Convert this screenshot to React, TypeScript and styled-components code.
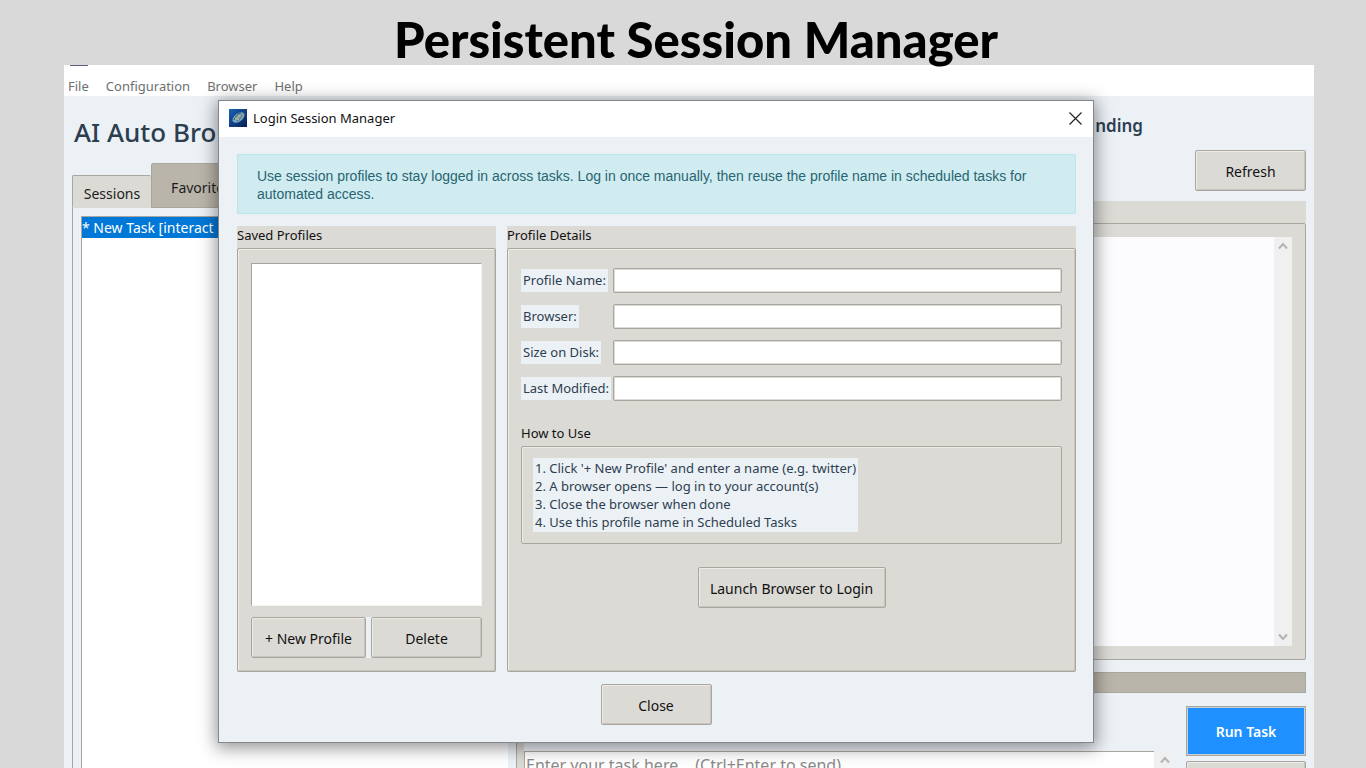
import React from "react";
import styled, { createGlobalStyle, css } from "styled-components";

const ui = '"Noto Sans", "Open Sans", sans-serif';
const color = {
  page: "#d9d9d9",
  pane: "#ecf1f6",
  face: "#dcdad5",
  trough: "#bab5ab",
  edge: "#a9a69f",
  light: "#eeebe7",
  navy: "#2c3e50",
};

const Global = createGlobalStyle`
  * { box-sizing: border-box; }
  body { margin: 0; background: ${color.page}; font-family: ${ui}; }
  h1, h2, h3, p, ol, ul { margin: 0; padding: 0; font-weight: 400; list-style: none; }
  button, input, textarea { font-family: inherit; }
`;

const Page = styled.div`
  position: relative;
  display: flex;
  flex-direction: column;
  height: 100vh;
  overflow: hidden;
`;

const Headline = styled.h1`
  flex: none;
  height: 65px;
  padding: 8px 0 0 26px;
  && { font-weight: 900; }
  font-family: Lato, sans-serif;
  font-size: 49px;
  line-height: 62px;
  text-align: center;
  white-space: nowrap;
  color: #000;
  position: relative;
  z-index: 1;
`;

const AppWindow = styled.main`
  flex: 1;
  min-height: 0;
  display: flex;
  flex-direction: column;
  margin: 0 52px 0 64px;
  background: ${color.pane};
`;

const WindowEdge = styled.div`
  flex: none;
  width: 18px;
  height: 1px;
  margin-left: 6px;
  background: #5b5f86;
`;

const MenuArea = styled.header`
  flex: none;
  height: 31px;
  background: #fff;
`;

const MenuBar = styled.nav`
  display: flex;
  align-items: center;
  gap: 17px;
  padding: 11px 4px 0;
`;

const MenuItem = styled.button`
  border: 0;
  padding: 0;
  background: none;
  font-size: 13px;
  line-height: 18px;
  color: #6f6f6f;
`;

const Workspace = styled.div`
  flex: 1;
  min-height: 0;
  display: grid;
  grid-template-columns: 444px 1fr;
  padding: 0 8px;
`;

const LeftColumn = styled.section`
  display: flex;
  flex-direction: column;
  width: 436px;
  min-height: 0;
`;

const AppTitle = styled.h2`
  flex: none;
  height: 67px;
  padding: 19px 2px 0;
  && { font-weight: 500; }
  font-size: 26px;
  line-height: 34px;
  white-space: nowrap;
  color: ${color.navy};
`;

const Tabs = styled.div`
  flex: none;
  display: flex;
  align-items: flex-end;
  height: 45px;
`;

const Tab = styled.button<{ $active?: boolean }>`
  height: ${(p) => (p.$active ? 33 : 45)}px;
  width: ${(p) => (p.$active ? 79 : 100)}px;
  padding: 3px 0 0;
  border: 1px solid ${color.edge};
  border-bottom-color: ${(p) => (p.$active ? color.face : color.edge)};
  border-right-width: ${(p) => (p.$active ? 0 : 1)}px;
  border-radius: 2px 2px 0 0;
  background: ${(p) => (p.$active ? color.face : color.trough)};
  font-size: 14px;
  color: #1c1c1c;
`;

const TabBody = styled.div`
  flex: 1;
  padding: 8px 0 0 8px;
  border-left: 1px solid ${color.edge};
`;

const TaskList = styled.ul`
  height: 100%;
  border: 1px solid ${color.edge};
  border-width: 1px 0 0 1px;
  background: #fff;
`;

const TaskItem = styled.li`
  height: 21px;
  font-size: 14px;
  line-height: 21px;
  white-space: nowrap;
  background: #0078d7;
  color: #fff;
`;

const RightColumn = styled.section`
  display: flex;
  flex-direction: column;
  min-width: 0;
  min-height: 0;
  & > * { flex: none; }
`;

const Status = styled.p`
  height: 54px;
  padding: 17px 163px 0 0;
  text-align: right;
  font-size: 17px;
  line-height: 26px;
  && { font-weight: 600; }
  color: ${color.navy};
`;

const ToolRow = styled.div`
  display: flex;
  justify-content: flex-end;
  height: 51px;
`;

const Button = styled.button<{ $width?: number }>`
  height: 41px;
  min-width: ${(p) => p.$width ?? 111}px;
  padding: 2px 0 0;
  border: 1px solid ${color.edge};
  border-radius: 2px;
  background: ${color.face};
  box-shadow: inset 1px 1px 0 ${color.light}, inset -1px -1px 0 #c9c5bd;
  font-size: 14px;
  line-height: 20px;
  white-space: nowrap;
  color: #111;
`;

const OutputHead = styled.div`
  height: 22px;
  background: ${color.face};
`;

const OutputFrame = styled.div`
  height: 437px;
  padding: 13px;
  border: 1px solid ${color.edge};
  border-radius: 2px;
  background: ${color.face};
`;

const OutputPane = styled.div`
  display: flex;
  justify-content: flex-end;
  height: 100%;
  background: #fcfcff;
`;

const ScrollTrack = styled.div`
  display: flex;
  flex-direction: column;
  justify-content: space-between;
  align-items: center;
  width: 18px;
  padding: 5px 0;
  background: #f0f0f0;
`;

const ProgressTrough = styled.div`
  height: 21px;
  margin: 12px 0 13px;
  border: 1px solid ${color.edge};
  background: ${color.trough};
`;

const PromptRow = styled.div`
  display: flex;
  gap: 12px;
`;

const PromptFrame = styled.div`
  flex: 1;
  display: flex;
  align-items: flex-start;
  height: 140px;
  padding: 45px 0 0 7px;
  border-left: 1px solid ${color.edge};
  background: linear-gradient(90deg, ${color.face} 7px, ${color.pane} 7px);
`;

const Prompt = styled.textarea`
  flex: 1;
  height: 90px;
  margin-right: 2px;
  padding: 3px 1px;
  border: 1px solid ${color.edge};
  border-right: 0;
  resize: none;
  outline: none;
  overflow: hidden;
  font-size: 16px;
  line-height: 20px;
  background: #fff;
  &::placeholder { color: #8a8a8a; opacity: 1; }
`;

const PromptScroll = styled(ScrollTrack)`
  height: 90px;
`;

const PromptActions = styled.div`
  display: flex;
  flex-direction: column;
  gap: 5px;
`;

const RunButton = styled.button`
  width: 120px;
  height: 50px;
  padding: 0;
  border: 1px solid ${color.edge};
  background: #1e90ff;
  box-shadow: inset 0 0 0 1px #c9cfd6;
  font-size: 14px;
  font-weight: 600;
  color: #fff;
`;

const Dialog = styled.div`
  position: absolute;
  top: 100px;
  left: 218px;
  right: 272px;
  border: 1px solid #85888b;
  background: ${color.pane};
  box-shadow: 0 3px 16px 2px rgba(0, 0, 0, 0.42);
`;

const TitleBar = styled.header`
  display: flex;
  align-items: center;
  gap: 6px;
  height: 36px;
  padding: 0 11px 2px 10px;
  background: #fff;
`;

const DialogTitle = styled.h2`
  flex: 1;
  font-size: 13px;
  line-height: 18px;
  color: #111;
`;

const CloseIconButton = styled.button`
  display: flex;
  border: 0;
  padding: 0;
  background: none;
`;

const DialogBody = styled.div`
  display: flex;
  flex-direction: column;
  gap: 12px;
  padding: 17px 18px;
`;

const Banner = styled.p`
  margin-right: -1px;
  padding: 12px 18px 10px 19px;
  border: 1px solid #bee5eb;
  background: #d1ecf1;
  font-family: "Liberation Sans", Arial, sans-serif;
  font-size: 14px;
  line-height: 18px;
  color: #276572;
`;

const Groups = styled.div`
  display: grid;
  grid-template-columns: 259px 1fr;
  gap: 11px;
  height: 446px;
  margin-right: -1px;
`;

const Group = styled.section`
  display: flex;
  flex-direction: column;
  min-width: 0;
  background: ${color.face};
`;

const groupTitle = css`
  font-size: 13px;
  line-height: 18px;
  color: #111;
`;

const GroupTitle = styled.h3`
  ${groupTitle}
  height: 22px;
`;

const Frame = styled.div`
  flex: 1;
  display: flex;
  flex-direction: column;
  padding: 14px 13px 13px;
  border: 1px solid ${color.edge};
  border-radius: 2px;
  box-shadow: inset 1px 1px 0 ${color.light}, inset -1px -1px 0 #c9c5bd;
`;

const ProfileList = styled.ul`
  flex: 1;
  margin: 0 0 11px;
  border: 1px solid;
  border-color: #a5a5a5 #f4f4f4 #f4f4f4 #a5a5a5;
  background: #fff;
`;

const ProfileActions = styled.div`
  display: grid;
  grid-template-columns: 115px 1fr;
  gap: 5px;
  background: ${color.pane};
`;

const Form = styled.div`
  display: grid;
  grid-template-columns: 92px 1fr;
  align-items: center;
  row-gap: 11px;
  padding-top: 5px;
`;

const FieldLabel = styled.label`
  justify-self: start;
  height: 23px;
  padding: 0 2px;
  font-size: 13px;
  line-height: 22px;
  white-space: nowrap;
  background: ${color.pane};
  color: ${color.navy};
`;

const TextField = styled.input`
  width: 100%;
  height: 25px;
  padding: 0 4px;
  border: 1px solid ${color.edge};
  border-radius: 2px;
  box-shadow: inset 0 0 0 1px #dddbd6;
  outline: none;
  font-size: 13px;
  background: #fff;
`;

const HelpTitle = styled.h3`
  ${groupTitle}
  margin: 23px 0 4px;
`;

const HelpFrame = styled.div`
  display: flex;
  align-items: flex-start;
  padding: 11px;
  border: 1px solid ${color.edge};
  border-radius: 2px;
  box-shadow: inset 1px 1px 0 ${color.light};
`;

const HelpSteps = styled.ol`
  padding: 1px 2px;
  font-size: 13px;
  line-height: 18px;
  white-space: nowrap;
  background: ${color.pane};
  color: ${color.navy};
`;

const LaunchRow = styled.div`
  display: flex;
  justify-content: center;
  margin-top: 23px;
`;

const Footer = styled.footer`
  display: flex;
  justify-content: center;
`;

const Chevron = ({ down }: { down?: boolean }) => (
  <svg width="10" height="8" viewBox="0 0 10 8" fill="none" stroke="#b4b4b4" strokeWidth="2" aria-hidden="true">
    <path d={down ? "M1 1.5 5 6 9 1.5" : "M1 6.5 5 2 9 6.5"} />
  </svg>
);

const AppIcon = () => (
  <svg width="18" height="18" viewBox="0 0 18 18" aria-hidden="true">
    <defs>
      <linearGradient id="sky" x1="0" y1="0" x2="1" y2="1">
        <stop offset="0" stopColor="#1a62b4" />
        <stop offset="0.5" stopColor="#123f86" />
        <stop offset="1" stopColor="#071f4c" />
      </linearGradient>
      <linearGradient id="disc" x1="0" y1="1" x2="1" y2="0">
        <stop offset="0" stopColor="#4fa3dd" />
        <stop offset="0.5" stopColor="#8fa9a6" />
        <stop offset="1" stopColor="#5f93b5" />
      </linearGradient>
    </defs>
    <rect width="18" height="18" fill="url(#sky)" />
    <ellipse cx="9.5" cy="8.5" rx="7" ry="4" transform="rotate(-38 9.5 8.5)" fill="url(#disc)" />
    <path d="M5 11c1-3 3-6 7-7" stroke="#2b5c88" strokeWidth="1" fill="none" />
    <path d="M8 12c2-1 4-3 5-6" stroke="#3a6686" strokeWidth="1" fill="none" />
    <path d="M6 9.5l4 1M9 6.5l3 1" stroke="#b9b98f" strokeWidth="1" fill="none" />
  </svg>
);

const fields = ["Profile Name:", "Browser:", "Size on Disk:", "Last Modified:"];
const steps = [
  "1. Click '+ New Profile' and enter a name (e.g. twitter)",
  "2. A browser opens — log in to your account(s)",
  "3. Close the browser when done",
  "4. Use this profile name in Scheduled Tasks",
];

export default function App() {
  return (
    <Page>
      <Global />
      <Headline>Persistent Session Manager</Headline>
      <AppWindow>
        <MenuArea>
          <WindowEdge />
          <MenuBar>
            {["File", "Configuration", "Browser", "Help"].map((m) => (
              <MenuItem key={m}>{m}</MenuItem>
            ))}
          </MenuBar>
        </MenuArea>
        <Workspace>
          <LeftColumn>
            <AppTitle>AI Auto Bro</AppTitle>
            <Tabs>
              <Tab $active>Sessions</Tab>
              <Tab>Favorites</Tab>
            </Tabs>
            <TabBody>
              <TaskList>
                <TaskItem>* New Task [interact</TaskItem>
              </TaskList>
            </TabBody>
          </LeftColumn>
          <RightColumn>
            <Status>nding</Status>
            <ToolRow>
              <Button>Refresh</Button>
            </ToolRow>
            <OutputHead />
            <OutputFrame>
              <OutputPane>
                <ScrollTrack>
                  <Chevron />
                  <Chevron down />
                </ScrollTrack>
              </OutputPane>
            </OutputFrame>
            <ProgressTrough />
            <PromptRow>
              <PromptFrame>
                <Prompt aria-label="Task" placeholder="Enter your task here... (Ctrl+Enter to send)" />
                <PromptScroll>
                  <Chevron />
                </PromptScroll>
              </PromptFrame>
              <PromptActions>
                <RunButton>Run Task</RunButton>
                <Button $width={120} aria-label="Stop" />
              </PromptActions>
            </PromptRow>
          </RightColumn>
        </Workspace>
      </AppWindow>

      <Dialog role="dialog" aria-labelledby="dialog-title">
        <TitleBar>
          <AppIcon />
          <DialogTitle id="dialog-title">Login Session Manager</DialogTitle>
          <CloseIconButton aria-label="Close dialog">
            <svg width="13" height="13" viewBox="0 0 13 13" stroke="#222" strokeWidth="1.2" aria-hidden="true">
              <path d="M.5.5l12 12M12.5.5l-12 12" />
            </svg>
          </CloseIconButton>
        </TitleBar>
        <DialogBody>
          <Banner>
            Use session profiles to stay logged in across tasks. Log in once manually, then reuse the profile name in
            scheduled tasks for automated access.
          </Banner>
          <Groups>
            <Group>
              <GroupTitle>Saved Profiles</GroupTitle>
              <Frame>
                <ProfileList />
                <ProfileActions>
                  <Button>+ New Profile</Button>
                  <Button>Delete</Button>
                </ProfileActions>
              </Frame>
            </Group>
            <Group>
              <GroupTitle>Profile Details</GroupTitle>
              <Frame>
                <Form>
                  {fields.map((f, i) => (
                    <React.Fragment key={f}>
                      <FieldLabel htmlFor={`field-${i}`}>{f}</FieldLabel>
                      <TextField id={`field-${i}`} />
                    </React.Fragment>
                  ))}
                </Form>
                <HelpTitle>How to Use</HelpTitle>
                <HelpFrame>
                  <HelpSteps>
                    {steps.map((s) => (
                      <li key={s}>{s}</li>
                    ))}
                  </HelpSteps>
                </HelpFrame>
                <LaunchRow>
                  <Button $width={188}>Launch Browser to Login</Button>
                </LaunchRow>
              </Frame>
            </Group>
          </Groups>
          <Footer>
            <Button>Close</Button>
          </Footer>
        </DialogBody>
      </Dialog>
    </Page>
  );
}
